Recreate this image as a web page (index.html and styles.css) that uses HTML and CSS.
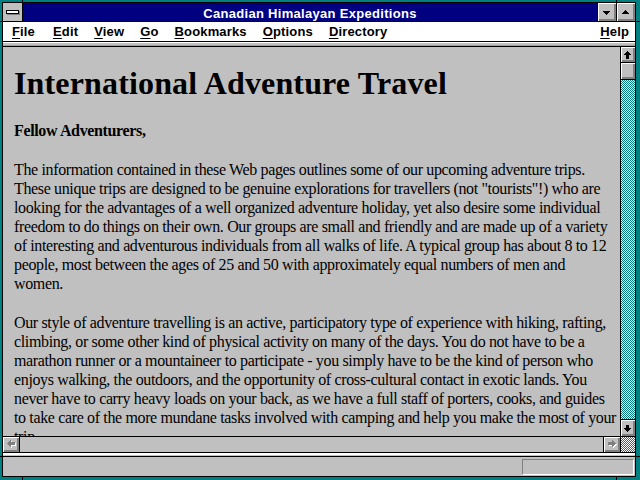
FILE: index.html
```html
<!DOCTYPE html>
<html>
<head>
<meta charset="utf-8">
<title>Canadian Himalayan Expeditions</title>
<link rel="stylesheet" href="styles.css">
</head>
<body>
<div class="frame">
  <span class="notch v top l"></span>
  <span class="notch v top r"></span>
  <span class="notch v bot l"></span>
  <span class="notch v bot r"></span>
  <span class="notch h left t"></span>
  <span class="notch h left b"></span>
  <span class="notch h right t"></span>
  <span class="notch h right b"></span>
  <div class="win">
    <div class="titlebar">
      <div class="sysmenu">
        <svg width="19" height="18" viewBox="0 0 19 18" shape-rendering="crispEdges">
          <rect x="4" y="8" width="13" height="4" fill="#808080"/>
          <rect x="3" y="7" width="13" height="4" fill="#000"/>
          <rect x="4" y="8" width="11" height="2" fill="#fff"/>
        </svg>
      </div>
      <div class="caption">Canadian Himalayan Expeditions</div>
      <div class="tbtn">
        <svg width="18" height="18" viewBox="0 0 18 18" shape-rendering="crispEdges">
          <rect x="5" y="8" width="7" height="1"/>
          <rect x="6" y="9" width="5" height="1"/>
          <rect x="7" y="10" width="3" height="1"/>
          <rect x="8" y="11" width="1" height="1"/>
        </svg>
      </div>
      <div class="tbtn last">
        <svg width="18" height="18" viewBox="0 0 18 18" shape-rendering="crispEdges">
          <rect x="8" y="7" width="1" height="1"/>
          <rect x="7" y="8" width="3" height="1"/>
          <rect x="6" y="9" width="5" height="1"/>
          <rect x="5" y="10" width="7" height="1"/>
        </svg>
      </div>
    </div>
    <div class="menubar">
      <span class="mi"><u>F</u>ile</span>
      <span class="mi"><u>E</u>dit</span>
      <span class="mi"><u>V</u>iew</span>
      <span class="mi"><u>G</u>o</span>
      <span class="mi"><u>B</u>ookmarks</span>
      <span class="mi"><u>O</u>ptions</span>
      <span class="mi"><u>D</u>irectory</span>
      <span class="mi help"><u>H</u>elp</span>
    </div>
    <div class="sep"></div>
    <div class="view">
      <div class="content">
        <h1>International Adventure Travel</h1>
        <p><b>Fellow Adventurers,</b></p>
        <p>The information contained in these Web pages outlines some of our upcoming adventure trips.<br>
        These unique trips are designed to be genuine explorations for travellers (not "tourists"!) who are<br>
        looking for the advantages of a well organized adventure holiday, yet also desire some individual<br>
        freedom to do things on their own. Our groups are small and friendly and are made up of a variety<br>
        of interesting and adventurous individuals from all walks of life. A typical group has about 8 to 12<br>
        people, most between the ages of 25 and 50 with approximately equal numbers of men and<br>
        women.</p>
        <p>Our style of adventure travelling is an active, participatory type of experience with hiking, rafting,<br>
        climbing, or some other kind of physical activity on many of the days. You do not have to be a<br>
        marathon runner or a mountaineer to participate - you simply have to be the kind of person who<br>
        enjoys walking, the outdoors, and the opportunity of cross-cultural contact in exotic lands. You<br>
        never have to carry heavy loads on your back, as we have a full staff of porters, cooks, and guides<br>
        to take care of the more mundane tasks involved with camping and help you make the most of your<br>
        trip.</p>
      </div>
      <div class="vscroll">
        <div class="sbtn up">
          <svg width="14" height="15" viewBox="0 0 14 15" shape-rendering="crispEdges">
            <rect x="6" y="4" width="1" height="1"/>
            <rect x="5" y="5" width="3" height="1"/>
            <rect x="4" y="6" width="5" height="1"/>
            <rect x="3" y="7" width="7" height="1"/>
            <rect x="5" y="8" width="3" height="4"/>
          </svg>
        </div>
        <div class="thumb"></div>
        <div class="track"></div>
        <div class="sbtn down">
          <svg width="14" height="16" viewBox="0 0 14 16" shape-rendering="crispEdges">
            <rect x="5" y="5" width="3" height="3"/>
            <rect x="3" y="8" width="7" height="1"/>
            <rect x="4" y="9" width="5" height="1"/>
            <rect x="5" y="10" width="3" height="1"/>
            <rect x="6" y="11" width="1" height="1"/>
          </svg>
        </div>
      </div>
      <div class="hscroll">
        <div class="hbtn left">
          <svg width="16" height="15" viewBox="0 0 16 15" shape-rendering="crispEdges">
            <g fill="#fff" transform="translate(1,1)">
              <rect x="4" y="6" width="1" height="1"/>
              <rect x="5" y="5" width="1" height="3"/>
              <rect x="6" y="4" width="1" height="5"/>
              <rect x="7" y="3" width="1" height="7"/>
              <rect x="8" y="5" width="4" height="3"/>
            </g>
            <g fill="#808080">
              <rect x="4" y="6" width="1" height="1"/>
              <rect x="5" y="5" width="1" height="3"/>
              <rect x="6" y="4" width="1" height="5"/>
              <rect x="7" y="3" width="1" height="7"/>
              <rect x="8" y="5" width="4" height="3"/>
            </g>
          </svg>
        </div>
        <div class="htrack"></div>
        <div class="hbtn right">
          <svg width="16" height="15" viewBox="0 0 16 15" shape-rendering="crispEdges">
            <g fill="#fff" transform="translate(1,1)">
              <rect x="11" y="6" width="1" height="1"/>
              <rect x="10" y="5" width="1" height="3"/>
              <rect x="9" y="4" width="1" height="5"/>
              <rect x="8" y="3" width="1" height="7"/>
              <rect x="4" y="5" width="4" height="3"/>
            </g>
            <g fill="#808080">
              <rect x="11" y="6" width="1" height="1"/>
              <rect x="10" y="5" width="1" height="3"/>
              <rect x="9" y="4" width="1" height="5"/>
              <rect x="8" y="3" width="1" height="7"/>
              <rect x="4" y="5" width="4" height="3"/>
            </g>
          </svg>
        </div>
      </div>
      <div class="corner"></div>
    </div>
    <div class="sep2"></div>
    <div class="status">
      <div class="statbox"></div>
    </div>
  </div>
</div>
</body>
</html>
```

FILE: styles.css
```css
html, body {
  margin: 0;
  padding: 0;
  background: #008080;
}

.frame {
  position: relative;
  width: 640px;
  height: 480px;
  box-sizing: border-box;
  padding: 2px 4px 3px 2px;
  background: #008080;
  overflow: hidden;
}

/* resize-corner notches painted over the teal frame */
.notch {
  position: absolute;
  background: #000;
}
.notch.v { width: 1px; }
.notch.v.top { top: 0; height: 2px; }
.notch.v.bot { bottom: 0; height: 3px; }
.notch.v.l { left: 22px; }
.notch.v.r { left: 616px; }
.notch.h { height: 1px; }
.notch.h.left { left: 0; width: 2px; }
.notch.h.right { right: 0; width: 4px; }
.notch.h.t { top: 21px; }
.notch.h.b { top: 456px; }

.win {
  height: 100%;
  box-sizing: border-box;
  border: 1px solid #000;
  background: #c0c0c0;
  display: flex;
  flex-direction: column;
}

/* ---------- title bar ---------- */
.titlebar {
  display: flex;
  height: 18px;
  border-bottom: 1px solid #000;
  flex: none;
}
.sysmenu {
  width: 19px;
  height: 18px;
  background: #c0c0c0;
  border-right: 1px solid #000;
}
.sysmenu svg, .tbtn svg, .sbtn svg, .hbtn svg { display: block; }
.caption {
  flex: 1;
  background: #000080;
  color: #fff;
  font: bold 13px/21px "Liberation Sans", Arial, sans-serif;
  letter-spacing: 0.3px;
  text-align: center;
  height: 18px;
  overflow: hidden;
  border-right: 1px solid #000;
}
.tbtn {
  width: 18px;
  height: 18px;
  background: #c0c0c0;
  box-shadow: inset 1px 1px #fff, inset -1px -1px #808080, inset -2px -2px #808080;
  border-right: 1px solid #000;
}
.tbtn.last { border-right: 0; }

/* ---------- menu bar ---------- */
.menubar {
  display: flex;
  height: 19px;
  flex: none;
  background: #fff;
  border-bottom: 1px solid #000;
  padding: 0 6px 0 9px;
  font: bold 13px/19px "Liberation Sans", Arial, sans-serif;
  letter-spacing: 0.15px;
  color: #000;
}
.mi { margin-right: 16px; }
.mi:first-child { margin-right: 18px; }
.mi u { text-underline-offset: 2px; }
.mi.help { margin-left: auto; margin-right: 0; }

.sep {
  height: 4px;
  flex: none;
  background: linear-gradient(#fff 0 1px, #c0c0c0 1px 3px, #a0a0a0 3px 4px);
  border-bottom: 1px solid #000;
}

/* ---------- document view ---------- */
.view {
  flex: 1;
  display: grid;
  grid-template-columns: 1fr 15px;
  grid-template-rows: 1fr 17px;
  min-height: 0;
}
.content {
  overflow: hidden;
  padding: 0 0 0 11px;
  font: 16px/19px "Liberation Serif", "Times New Roman", serif;
  color: #000;
  white-space: nowrap;
}
.content h1 {
  font-size: 32px;
  line-height: 38px;
  font-weight: bold;
  letter-spacing: 0.15px;
  margin: 17px 0 19px;
}
.content p {
  margin: 0 0 20px;
  letter-spacing: -0.36px;
}

.vscroll {
  border-left: 1px solid #000;
  display: flex;
  flex-direction: column;
  min-height: 0;
}
.sbtn {
  background: #c0c0c0;
  box-shadow: inset 1px 1px #fff, inset -1px -1px #808080, inset -2px -2px #808080;
  flex: none;
}
.sbtn.up { height: 15px; border-bottom: 1px solid #000; }
.sbtn.down { height: 16px; border-top: 1px solid #000; }
.thumb {
  height: 16px;
  flex: none;
  background: #c0c0c0;
  box-shadow: inset 1px 1px #fff, inset -1px -1px #808080, inset -2px -2px #808080;
  border-bottom: 1px solid #000;
}
.track, .corner {
  background: repeating-conic-gradient(#008080 0% 25%, #ffffff 0% 50%) 0 0 / 2px 2px;
}
.track { flex: 1; }

.hscroll {
  display: flex;
  border-top: 1px solid #000;
  border-bottom: 1px solid #000;
  background: #c0c0c0;
}
.hbtn {
  width: 16px;
  height: 15px;
  background: #c0c0c0;
  box-shadow: inset 1px 1px #fff, inset -1px -1px #808080, inset -2px -2px #808080;
}
.hbtn.left { border-right: 1px solid #000; }
.hbtn.right { border-left: 1px solid #000; }
.htrack { flex: 1; }
.corner {
  border-left: 1px solid #000;
  border-top: 1px solid #000;
  border-bottom: 1px solid #000;
}

/* ---------- status bar ---------- */
.sep2 {
  height: 3px;
  flex: none;
  background: linear-gradient(#fff 0 2px, #c0c0c0 2px 3px);
  border-bottom: 1px solid #000;
}
.status {
  height: 19px;
  flex: none;
  display: flex;
  justify-content: flex-end;
  align-items: flex-start;
}
.statbox {
  width: 110px;
  height: 14px;
  margin: 2px 1px 0 0;
  border: 1px solid;
  border-color: #808080 #fff #fff #808080;
}
```
